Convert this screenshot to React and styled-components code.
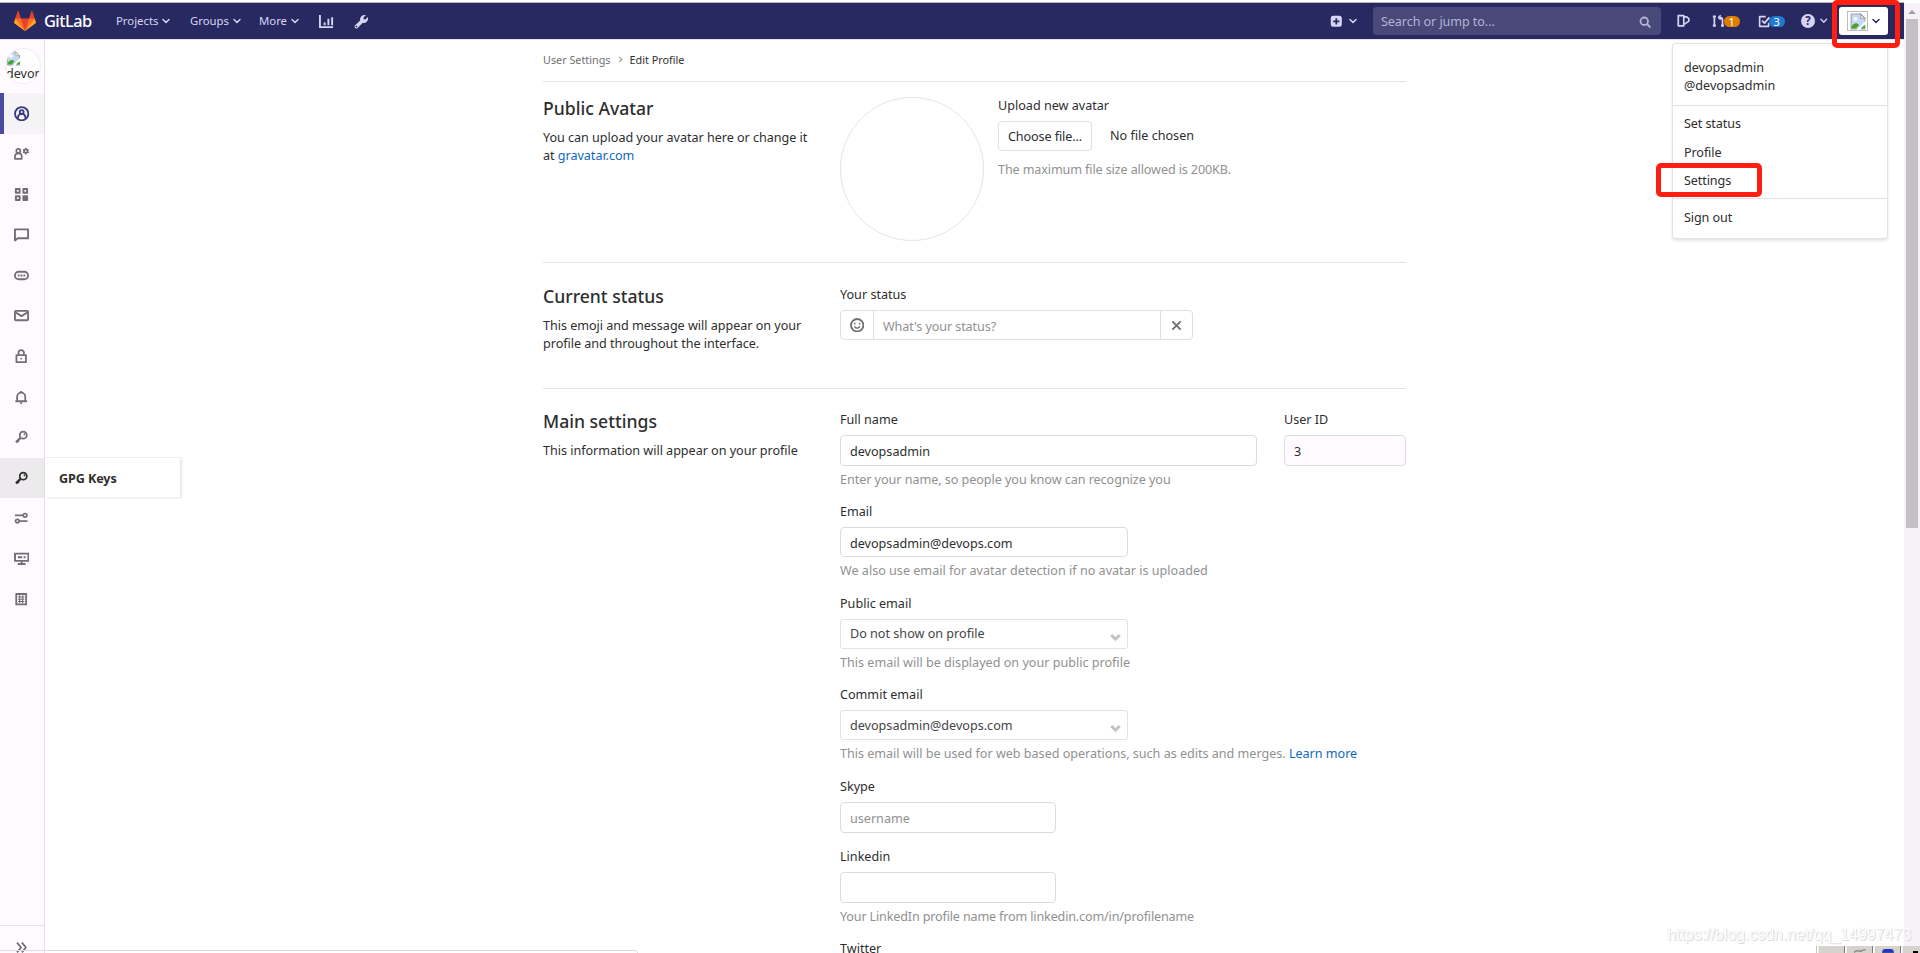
import React from "react";
import styled, { createGlobalStyle } from "styled-components";

const Icon = ({ size = 14.4, children, ...rest }) => (
  <svg
    width={size}
    height={size}
    viewBox="0 0 16 16"
    fill="none"
    stroke="currentColor"
    strokeWidth="2"
    strokeLinejoin="round"
    {...rest}
  >
    {children}
  </svg>
);

const Chevron = ({ size = 8 }) => (
  <Icon size={size} strokeWidth="2.9" strokeLinecap="round">
    <path d="M2 5l6 6 6-6" />
  </Icon>
);

const KeyIcon = () => (
  <Icon>
    <circle cx="10.3" cy="5.7" r="3.9" />
    <path d="M7.4 8.6L2.2 13.8M4 12l1.2 1.4" strokeWidth="2.6" />
    <circle cx="11.6" cy="4.7" r="1" fill="currentColor" stroke="none" />
  </Icon>
);

const BrokenImage = ({ width, height }) => (
  <svg width={width} height={height} viewBox="0 0 15 16">
    <path d="M1 1h9l4 4v10H1z" fill="#c4d8f7" stroke="#a3a3a3" />
    <path d="M10 1v4h4z" fill="#fff" stroke="#a3a3a3" />
    <circle cx="5" cy="5.5" r="1.8" fill="#fff" />
    <path d="M1.5 14.5v-2c2-3 5-4 7-1l-3 3z" fill="#4aa52e" />
    <path d="M15 7l-9 9h3l6-5z" fill="#fff" />
    <path d="M10 14.5l4-3.5v3.5z" fill="#4aa52e" />
  </svg>
);

const Tanuki = () => (
  <svg width="22" height="22" viewBox="0 0 36 36">
    <path fill="#e24329" d="M2 14l9.38 9v-9l-4-12.28c-.205-.632-1.176-.632-1.38 0z" />
    <path fill="#e24329" d="M34 14l-9.38 9v-9l4-12.28c.205-.632 1.176-.632 1.38 0z" />
    <path fill="#e24329" d="M18 34.38L3 14h30z" />
    <path fill="#fc6d26" d="M18 34.38L11.38 14H2l4 11z" />
    <path fill="#fc6d26" d="M18 34.38L24.62 14H34l-4 11z" />
    <path fill="#fca326" d="M2 14L.1 20.16c-.18.565 0 1.2.5 1.56L18 34.38z" />
    <path fill="#fca326" d="M34 14l1.9 6.16c.18.565 0 1.2-.5 1.56L18 34.38z" />
  </svg>
);

const SelectArrow = () => (
  <svg width="11" height="9" viewBox="0 0 11 9">
    <path d="M1.3 2l4.200 4.200L9.700 2" fill="none" stroke="#c3c3c3" strokeWidth="3" />
  </svg>
);

const sidebarItems = [
  {
    name: "Profile",
    active: true,
    icon: (
      <Icon size={15.4} strokeWidth="1.9">
        <circle cx="8" cy="8" r="6.9" />
        <circle cx="8" cy="6.3" r="2" />
        <path d="M4 13c0-3.4 1.4-4.9 4-4.9s4 1.5 4 4.9" />
      </Icon>
    ),
  },
  {
    name: "Account",
    icon: (
      <Icon size={15.4} strokeWidth="1.8">
        <circle cx="4.5" cy="5.2" r="2.1" />
        <path d="M1 13.3v-2.600c0-2 1.300-3 3.500-3s3.500 1 3.500 3v2.600z" />
        <circle cx="12.300" cy="5.300" r="1.900" />
        <path
          d="M12.300 1.800v1.500M12.300 7.300v1.500M9.300 3.600l1.200.7M14.100 6.300l1.200.7M9.300 7l1.200-.7M14.100 4.300l1.200-.7"
          strokeWidth="1.4"
        />
      </Icon>
    ),
  },
  {
    name: "Applications",
    icon: (
      <Icon size={15} strokeWidth="2.1">
        <rect x="2" y="2.200" width="4" height="4" />
        <rect x="10" y="2.200" width="4" height="4" />
        <rect x="2" y="9.900" width="4" height="4" />
        <rect x="10" y="9.900" width="4" height="4" fill="currentColor" />
      </Icon>
    ),
  },
  {
    name: "Chat",
    icon: (
      <Icon size={15}>
        <path d="M1 2.500h14v9.500H4l-3 2.300z" />
      </Icon>
    ),
  },
  {
    name: "Access Tokens",
    icon: (
      <Icon size={15}>
        <rect x="1" y="4" width="14" height="8" rx="4" />
        <path d="M4 8h2M7 8h2M10 8h2" />
      </Icon>
    ),
  },
  {
    name: "Emails",
    icon: (
      <Icon size={15}>
        <rect x="1" y="3" width="14" height="10" rx="1" />
        <path d="M1.500 4.500L8 8.700l6.500-4.200" />
      </Icon>
    ),
  },
  {
    name: "Password",
    icon: (
      <Icon>
        <rect x="2.700" y="6.800" width="10.600" height="7.800" />
        <path d="M5 6.500V4.200a3 3 0 016 0v2.300" />
        <circle cx="8" cy="10.700" r="1" fill="currentColor" stroke="none" />
      </Icon>
    ),
  },
  {
    name: "Notifications",
    icon: (
      <Icon>
        <path d="M3.500 12V7.500a4.500 4.500 0 019 0V12M1.500 12.500h13" />
        <path d="M8 1v2M7 14.700h2" />
      </Icon>
    ),
  },
  { name: "SSH Keys", icon: <KeyIcon /> },
  { name: "GPG Keys", hovered: true, icon: <KeyIcon /> },
  {
    name: "Preferences",
    icon: (
      <Icon strokeWidth="1.9">
        <circle cx="12.300" cy="4.800" r="2" />
        <path d="M1 4.800h9" />
        <circle cx="3.700" cy="11.200" r="2" />
        <path d="M6 11.200h9" />
      </Icon>
    ),
  },
  {
    name: "Active Sessions",
    icon: (
      <Icon size={15.4}>
        <rect x="1" y="2.700" width="14" height="7.600" />
        <path d="M4 6.500h4.500M10 6.500h2" />
        <path d="M8 10v3M4 13.500h8" />
      </Icon>
    ),
  },
  {
    name: "Authentication log",
    icon: (
      <Icon>
        <rect x="2.500" y="2.200" width="11" height="11.600" />
        <path d="M4.500 5.500h7M4.500 8h7M4.500 10.500h7M6.300 3.500v9M9.700 3.500v9" strokeWidth="1.2" />
      </Icon>
    ),
  },
];

function FormRow({ label, help, height, spacing, children }) {
  return (
    <FormGroup $height={height}>
      <Label>{label}</Label>
      {children}
      {help && <Help $spacing={spacing}>{help}</Help>}
    </FormGroup>
  );
}

function Header() {
  return (
    <Navbar>
      <Brand>
        <Tanuki />
        <span>GitLab</span>
      </Brand>
      <NavCell $width={74}>
        Projects <Chevron />
      </NavCell>
      <NavCell $width={69}>
        Groups <Chevron />
      </NavCell>
      <NavCell $width={60}>
        More <Chevron />
      </NavCell>
      <NavCell $width={35}>
        <Icon size={15}>
          <path d="M1 1v13h14M6 12V9M10 12V5M14 12V3.500" />
        </Icon>
      </NavCell>
      <NavCell $width={20}>
        <Icon size={15} stroke="none" fill="currentColor">
          <path
            fillRule="evenodd"
            d="M14.700 3.300l-2.500 2.500-1.800-.3-.3-1.800 2.500-2.500A4.800 4.800 0 006.600 7L1.200 12.100a2 2 0 000 2.700 2 2 0 002.700 0L9.100 9.500a4.800 4.800 0 005.600-6.200zM3.400 13.700a.9.900 0 11-.9-1.300.9.900 0 01.9 1.300z"
          />
        </Icon>
      </NavCell>
      <NavRight>
        <NavCell $width={43} $gap={6}>
          <Icon size={12.6}>
            <rect x="1" y="1" width="14" height="14" rx="3" fill="currentColor" stroke="none" />
            <path d="M8 4v8M4 8h8" stroke="#292961" strokeWidth="2.2" />
          </Icon>
          <Chevron />
        </NavCell>
        <Search>
          <span>Search or jump to...</span>
          <Icon size={12}>
            <circle cx="7" cy="7" r="5" strokeWidth="2.4" />
            <path d="M11 11l3.500 3.500" strokeWidth="2.6" strokeLinecap="round" />
          </Icon>
        </Search>
        <NavCell $width={35}>
          <Icon size={13.5}>
            <path d="M1.500 2H8v12H1.500zM9 3.500h2.500l2.500 2v3L9 12" />
          </Icon>
        </NavCell>
        <NavCell $width={46} $gap={0}>
          <Icon size={14}>
            <path d="M2.700 4v9M12 13.500V6.500c0-2-1-2.500-3-2.500M10 1.500L7.500 4 10 6.500" />
            <path d="M1 3h3.400M1 13.300h3.400M10.300 13.300h3.400" strokeWidth="2.4" />
          </Icon>
          <Count $color="#de7e00">1</Count>
        </NavCell>
        <NavCell $width={43} $gap={0}>
          <Icon size={13}>
            <path d="M9.500 2H2v12h11V9.500" />
            <path d="M5 7l3 3 6-7" strokeWidth="2.2" />
          </Icon>
          <Count $color="#1f78d1">3</Count>
        </NavCell>
        <NavCell $width={38} $gap={5}>
          <HelpMark>?</HelpMark>
          <Chevron size={7.5} />
        </NavCell>
        <UserButton>
          <BrokenFrame>
            <BrokenImage width={16} height={17} />
          </BrokenFrame>
          <Chevron size={8} />
        </UserButton>
      </NavRight>
    </Navbar>
  );
}

function Sidebar() {
  return (
    <Side>
      <SideAvatar>
        <BrokenImage width={15} height={15} />
        <span>devopsadmin</span>
      </SideAvatar>
      {sidebarItems.map((item) => (
        <SideItem
          key={item.name}
          title={item.name}
          $active={item.active}
          $hovered={item.hovered}
        >
          {item.icon}
          {item.hovered && <Flyout>{item.name}</Flyout>}
        </SideItem>
      ))}
      <Collapse>
        <Icon size={13} strokeWidth="2.2">
          <path d="M2.500 2l5 6-5 6M8.500 2l5 6-5 6" />
        </Icon>
      </Collapse>
    </Side>
  );
}

function UserMenu() {
  return (
    <Menu>
      <MenuUser>
        devopsadmin
        <br />
        @devopsadmin
      </MenuUser>
      <MenuGroup $height={93} $top={3}>
        <MenuItem>Set status</MenuItem>
        <MenuItem>Profile</MenuItem>
        <MenuItem>Settings</MenuItem>
      </MenuGroup>
      <MenuGroup $height={38} $top={4}>
        <MenuItem>Sign out</MenuItem>
      </MenuGroup>
    </Menu>
  );
}

export default function App() {
  return (
    <Window>
      <GlobalStyle />
      <Page>
        <Header />
        <Body>
          <Sidebar />
          <Content>
            <Breadcrumbs>
              <span>User Settings</span>
              <Icon size={7} strokeWidth="3">
                <path d="M5 2l6 6-6 6" />
              </Icon>
              <strong>Edit Profile</strong>
            </Breadcrumbs>

            <Section $height={181} $top={15}>
              <Intro>
                <h4>Public Avatar</h4>
                <p>
                  You can upload your avatar here or change it
                  <br />
                  at <Link>gravatar.com</Link>
                </p>
              </Intro>
              <AvatarCircle />
              <Upload>
                <Label $top={0}>Upload new avatar</Label>
                <FileRow>
                  <FileButton>Choose file...</FileButton>
                  <span>No file chosen</span>
                </FileRow>
                <Help $top={10} $spacing={-0.12}>
                  The maximum file size allowed is 200KB.
                </Help>
              </Upload>
            </Section>

            <Section $height={126} $top={22}>
              <Intro>
                <h4>Current status</h4>
                <p>
                  This emoji and message will appear on your
                  <br />
                  profile and throughout the interface.
                </p>
              </Intro>
              <Fields>
                <Label>Your status</Label>
                <StatusGroup>
                  <StatusButton $width={32}>
                    <Icon size={14.4}>
                      <circle cx="8" cy="8" r="6.9" />
                      <path d="M5 9.300c.6 1.300 1.700 2 3 2s2.400-.7 3-2" strokeWidth="1.4" />
                      <path d="M5.300 5.300v1.900M10.700 5.300v1.900" strokeWidth="1.6" />
                    </Icon>
                  </StatusButton>
                  <StatusInput>What's your status?</StatusInput>
                  <StatusButton $width={31}>
                    <Icon size={11} strokeWidth="2.8">
                      <path d="M2 2l12 12M14 2L2 14" />
                    </Icon>
                  </StatusButton>
                </StatusGroup>
              </Fields>
            </Section>

            <Section $height={600} $top={21}>
              <Intro>
                <h4>Main settings</h4>
                <p>This information will appear on your profile</p>
              </Intro>
              <Fields>
                <NameRow>
                  <FormRow
                    label="Full name"
                    height={91.8}
                    spacing={-0.05}
                    help="Enter your name, so people you know can recognize you"
                  >
                    <Field $width={417}>devopsadmin</Field>
                  </FormRow>
                  <FormRow label="User ID" height={91.8}>
                    <Field $width={122} $readOnly>
                      3
                    </Field>
                  </FormRow>
                </NameRow>
                <FormRow
                  label="Email"
                  height={91.8}
                  help="We also use email for avatar detection if no avatar is uploaded"
                >
                  <Field $width={288}>devopsadmin@devops.com</Field>
                </FormRow>
                <FormRow
                  label="Public email"
                  height={91.8}
                  help="This email will be displayed on your public profile"
                >
                  <Select>
                    Do not show on profile <SelectArrow />
                  </Select>
                </FormRow>
                <FormRow
                  label="Commit email"
                  height={91.8}
                  spacing={-0.02}
                  help={
                    <>
                      This email will be used for web based operations, such as edits and
                      merges. <Link>Learn more</Link>
                    </>
                  }
                >
                  <Select>
                    devopsadmin@devops.com <SelectArrow />
                  </Select>
                </FormRow>
                <FormRow label="Skype" height={70.2}>
                  <Field $width={216} $placeholder>
                    username
                  </Field>
                </FormRow>
                <FormRow
                  label="Linkedin"
                  height={91.8}
                  spacing={-0.16}
                  help="Your LinkedIn profile name from linkedin.com/in/profilename"
                >
                  <Field $width={216} />
                </FormRow>
                <FormRow label="Twitter" height={60} />
              </Fields>
            </Section>
          </Content>
        </Body>
        <UserMenu />
      </Page>
      <Scrollbar>
        <ScrollArrow />
        <ScrollThumb />
      </Scrollbar>

      <Highlight $left={1832} $top={0} $width={68} $height={48} />
      <Highlight $left={1656} $top={163} $width={106} $height={34} />
      <LinkPreview />
      <Tray>
        <TrayCell />
        <TrayCell>
          <svg width="12" height="4" viewBox="0 0 12 4">
            <path d="M0 3.500C3 0 5 3 7 2s3-1 4.500-1.500" stroke="#8b8b86" strokeWidth="1.5" fill="none" />
          </svg>
        </TrayCell>
        <TrayCell>
          <svg width="12" height="4" viewBox="0 0 12 4">
            <path d="M0 4a6 5 0 0112 0z" fill="#1c35c9" stroke="#5b6577" />
          </svg>
        </TrayCell>
        <TrayCell>
          <svg width="5" height="2">
            <rect width="5" height="2" fill="#000" />
          </svg>
        </TrayCell>
      </Tray>
      <Watermark>https://blog.csdn.net/qq_14997473</Watermark>
    </Window>
  );
}

const GlobalStyle = createGlobalStyle`
  * {
    box-sizing: border-box;
  }
  body {
    margin: 0;
    overflow: hidden;
    background: #fff;
    color: #2e2e2e;
    font-family: "Noto Sans", "Open Sans", sans-serif;
    font-size: 12.6px;
    line-height: 18px;
  }
  svg {
    display: block;
    flex: none;
  }
`;
const Window = styled.div`
  position: relative;
  display: flex;
  width: 1920px;
  height: 953px;
  overflow: hidden;
`;
const Page = styled.div`
  position: relative;
  display: flex;
  flex-direction: column;
  width: 1904px;
  padding-top: 2px;
`;
const Navbar = styled.header`
  display: flex;
  align-items: center;
  flex: none;
  height: 38px;
  padding: 0 16px 0 14px;
  border-top: 1px solid #b9b6b9;
  border-bottom: 1px solid #e6e4ea;
  background: #292961;
  color: #d6d5f3;
`;
const Brand = styled.div`
  display: flex;
  align-items: center;
  gap: 8px;
  width: 102px;
  color: #fff;
  span {
    font-size: 16.4px;
    font-weight: 500;
    letter-spacing: -0.55px;
  }
`;
const NavCell = styled.div`
  display: flex;
  align-items: center;
  gap: ${(p) => p.$gap ?? 4}px;
  width: ${(p) => p.$width}px;
  font-size: 11.34px;
`;
const NavRight = styled.div`
  display: flex;
  align-items: center;
  margin-left: auto;
`;
const Search = styled.div`
  display: flex;
  align-items: center;
  justify-content: space-between;
  width: 288px;
  height: 28px;
  margin-right: 16px;
  padding: 1px 10px 0 8px;
  border-radius: 4px;
  background: #494979;
  color: #b3b2d8;
  span {
    letter-spacing: -0.08px;
  }
`;
const Count = styled.span`
  width: 15.5px;
  height: 11px;
  margin-left: -2px;
  border-radius: 6px;
  background: ${(p) => p.$color};
  color: #fff;
  font-size: 11px;
  line-height: 11px;
  text-align: center;
`;
const HelpMark = styled.span`
  width: 14px;
  height: 14px;
  border-radius: 50%;
  background: #d6d5f3;
  color: #292961;
  font-size: 11.5px;
  font-weight: 700;
  line-height: 14px;
  text-align: center;
`;
const UserButton = styled.div`
  display: flex;
  align-items: center;
  gap: 4px;
  width: 49px;
  height: 28px;
  padding-left: 8px;
  border-radius: 3px;
  background: #fff;
  color: #292961;
`;
const BrokenFrame = styled.span`
  display: flex;
  align-items: center;
  justify-content: center;
  width: 21px;
  height: 20px;
  border: 1px solid #bdbdbd;
`;
const Body = styled.div`
  display: flex;
  flex: 1;
  min-height: 0;
`;
const Side = styled.nav`
  display: flex;
  flex-direction: column;
  flex: none;
  width: 45px;
  border-right: 1px solid #e3e0e3;
  background: #fefaff;
`;
const SideAvatar = styled.div`
  flex: none;
  width: 36px;
  height: 36px;
  margin: 8px 0 9px 5px;
  padding: 2px 0 0;
  overflow: hidden;
  border: 1px solid #f1edf2;
  border-radius: 50%;
  background: #fff;
  span {
    display: block;
    line-height: 16px;
  }
`;
const SideItem = styled.div`
  position: relative;
  display: flex;
  align-items: center;
  flex: none;
  height: 40.5px;
  padding-left: ${(p) => (p.$active ? 10 : 14)}px;
  border-left: ${(p) => (p.$active ? "4px solid #4b4ba3" : "none")};
  background: ${(p) => (p.$active ? "#f6f3f6" : p.$hovered ? "#edeaed" : "transparent")};
  color: ${(p) => (p.$active ? "#393982" : p.$hovered ? "#2e2e2e" : "#707070")};
`;
const Flyout = styled.div`
  position: absolute;
  left: 45px;
  top: -1px;
  width: 135px;
  height: 40px;
  padding-left: 14px;
  border-top: 1px solid #f1f0f1;
  background: #fff;
  box-shadow: 2px 1px 2px #e9e6e9;
  color: #2e2e2e;
  font-weight: 700;
  line-height: 41px;
  letter-spacing: -0.1px;
`;
const Collapse = styled.div`
  display: flex;
  justify-content: center;
  flex: none;
  height: 40px;
  margin-top: auto;
  margin-bottom: -12px;
  padding-top: 15px;
  padding-right: 2px;
  border-top: 1px solid #e6e3e7;
  color: #707070;
`;
const Content = styled.main`
  width: 863px;
  margin: 0 auto;
`;
const Breadcrumbs = styled.div`
  display: flex;
  align-items: center;
  gap: 6px;
  height: 42px;
  padding-bottom: 2px;
  border-bottom: 1px solid #e5e5e5;
  color: #707070;
  font-size: 10.8px;
  svg {
    color: #a5a5a5;
  }
  strong {
    color: #2e2e2e;
    font-weight: 400;
  }
`;
const Section = styled.section`
  display: flex;
  height: ${(p) => p.$height}px;
  padding-top: ${(p) => p.$top}px;
  border-bottom: 1px solid #e5e5e5;
`;
const Intro = styled.div`
  flex: none;
  width: 297px;
  white-space: nowrap;
  h4 {
    margin: 0 0 8.5px;
    font-size: 17.6px;
    font-weight: 500;
    line-height: 23px;
  }
  p {
    margin: 0;
    letter-spacing: -0.03px;
  }
`;
const Link = styled.a`
  color: #1068bf;
`;
const AvatarCircle = styled.div`
  width: 144px;
  height: 144px;
  border: 1px solid #e5e5e5;
  border-radius: 50%;
`;
const Upload = styled.div`
  margin-left: 14px;
`;
const Label = styled.div`
  height: 25px;
  padding-top: ${(p) => p.$top ?? 1}px;
`;
const FileRow = styled.div`
  display: flex;
  align-items: center;
  gap: 18px;
  margin-top: -1px;
  line-height: 20px;
`;
const FileButton = styled.span`
  width: 94px;
  height: 30px;
  border: 1px solid #e1e1e1;
  border-radius: 4px;
  line-height: 30px;
  letter-spacing: -0.1px;
  text-align: center;
`;
const Help = styled.div`
  margin-top: ${(p) => p.$top ?? 5}px;
  color: #919191;
  letter-spacing: ${(p) => p.$spacing ?? 0}px;
  white-space: nowrap;
`;
const Fields = styled.div`
  flex: 1;
`;
const StatusGroup = styled.div`
  display: flex;
  width: 353px;
  height: 30px;
  border: 1px solid #dfdfdf;
  border-radius: 4px;
`;
const StatusButton = styled.span`
  display: flex;
  align-items: center;
  justify-content: center;
  width: ${(p) => p.$width}px;
  color: #707070;
`;
const StatusInput = styled.div`
  flex: 1;
  padding-left: 9px;
  border: solid #dfdfdf;
  border-width: 0 1px;
  color: #919191;
  line-height: 31px;
  letter-spacing: -0.1px;
`;
const NameRow = styled.div`
  display: flex;
  justify-content: space-between;
  width: 566px;
`;
const FormGroup = styled.div`
  height: ${(p) => p.$height}px;
`;
const Field = styled.div`
  width: ${(p) => p.$width}px;
  height: 30.6px;
  padding-left: 9px;
  border: 1px solid #dcdcdc;
  border-radius: 4px;
  background: ${(p) => (p.$readOnly ? "#fefaff" : "#fff")};
  color: ${(p) => (p.$placeholder ? "#919191" : "#2e2e2e")};
  line-height: 31px;
`;
const Select = styled.div`
  display: flex;
  align-items: center;
  justify-content: space-between;
  width: 288px;
  height: 30px;
  margin-bottom: 5px;
  padding: 1px 6px 0 9px;
  border: 1px solid #e3e3e3;
  border-radius: 3px;
  color: #444;
  svg {
    margin-top: 6px;
  }
`;
const Menu = styled.div`
  position: absolute;
  right: 16px;
  top: 43px;
  width: 216px;
  height: 196px;
  border: 1px solid #e3e3e3;
  border-radius: 3px;
  background: #fff;
  box-shadow: 0 2px 3px rgba(0, 0, 0, 0.1);
`;
const MenuUser = styled.div`
  height: 61px;
  padding: 14.5px 0 0 11px;
`;
const MenuGroup = styled.div`
  height: ${(p) => p.$height}px;
  padding-top: ${(p) => p.$top}px;
  border-top: 1px solid #e0e0e0;
`;
const MenuItem = styled.div`
  height: 28.6px;
  padding-left: 11px;
  line-height: 29px;
  letter-spacing: -0.1px;
`;
const Scrollbar = styled.div`
  display: flex;
  flex-direction: column;
  align-items: center;
  width: 16px;
  margin-top: 3px;
  background: #f6f2f7;
`;
const ScrollArrow = styled.div`
  margin: 7px 0 5px;
  border: solid transparent;
  border-width: 0 4px 4px;
  border-bottom-color: #a29fa2;
`;
const ScrollThumb = styled.div`
  width: 12px;
  height: 509px;
  background: #c3c0c4;
`;
const Highlight = styled.div`
  position: absolute;
  left: ${(p) => p.$left}px;
  top: ${(p) => p.$top}px;
  width: ${(p) => p.$width}px;
  height: ${(p) => p.$height}px;
  border: 5px solid #ff1f12;
  border-radius: 5px;
`;
const LinkPreview = styled.div`
  position: absolute;
  left: -1px;
  top: 950px;
  width: 639px;
  height: 10px;
  border: 1px solid #dedbe0;
  border-radius: 0 3px 0 0;
`;
const Tray = styled.div`
  position: absolute;
  left: 1816px;
  bottom: 0;
  display: flex;
  gap: 1px;
  height: 7px;
  padding-left: 1px;
  border-left: 1px solid #c9c6c2;
  background: #fff;
`;
const TrayCell = styled.div`
  display: flex;
  align-items: flex-end;
  justify-content: center;
  width: 27px;
  border-left: 1px solid #efeeea;
  border-right: 1px solid #7d7b78;
  background: #d6d3ce;
`;
const Watermark = styled.div`
  position: absolute;
  right: 9px;
  top: 926px;
  color: #fff;
  font-family: "Liberation Sans", sans-serif;
  font-size: 15.9px;
  text-shadow: 1px 1px 0 #dcdcdc, 0 0 1px #d4d4d4;
`;
